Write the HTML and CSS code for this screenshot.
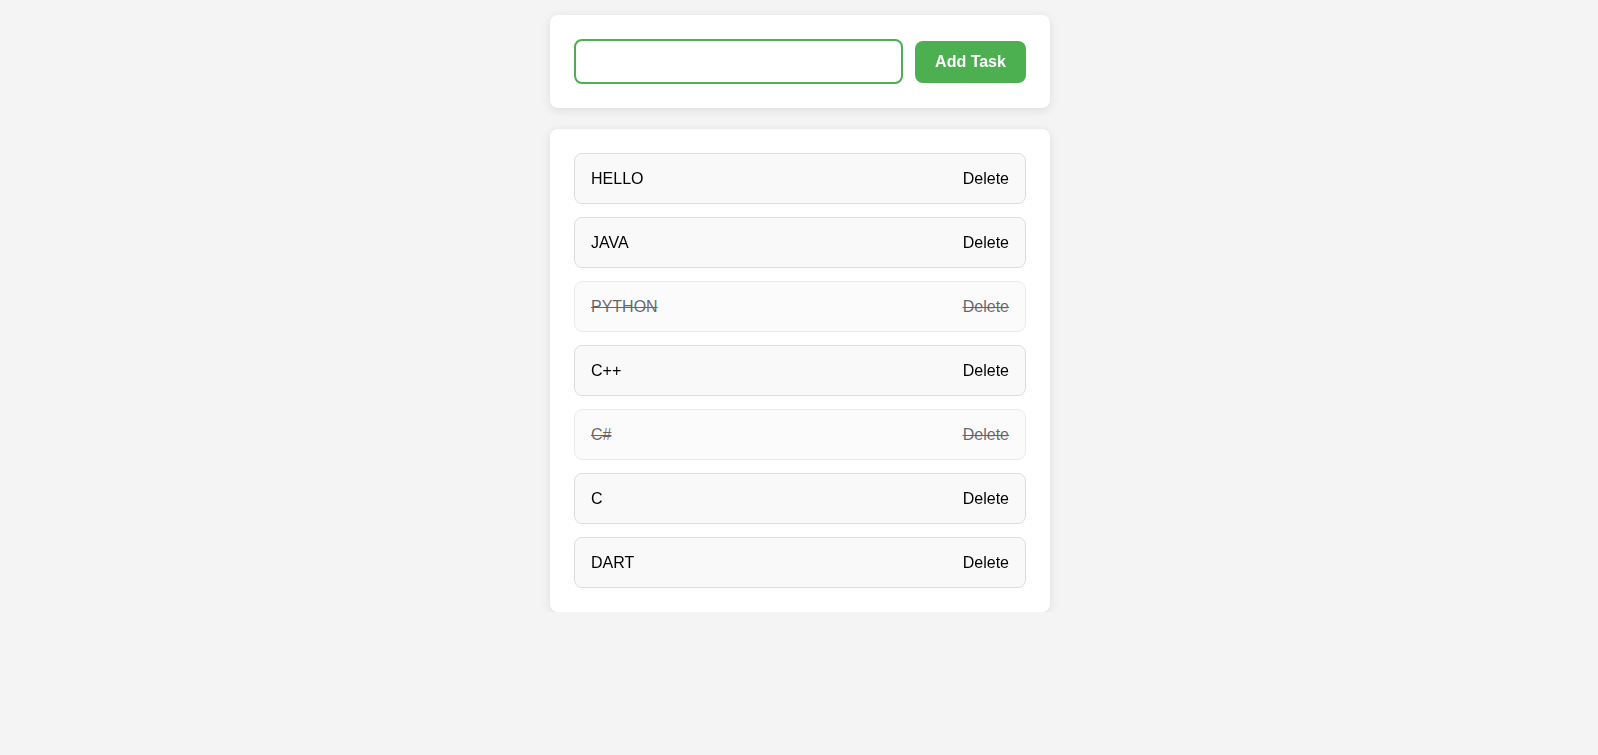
FILE: index.html
```html
<!DOCTYPE html>
<html lang="en">
<head>
<meta charset="utf-8">
<title>Todo</title>
<link rel="stylesheet" href="styles.css">
</head>
<body>
<main class="app">
  <section class="card add-card">
    <input class="task-input" type="text" autofocus>
    <button class="add-btn">Add Task</button>
  </section>
  <section class="card list-card">
    <ul class="task-list">
      <li class="task"><span class="task-text">HELLO</span><button class="del-btn">Delete</button></li>
      <li class="task"><span class="task-text">JAVA</span><button class="del-btn">Delete</button></li>
      <li class="task done"><span class="task-text">PYTHON</span><button class="del-btn">Delete</button></li>
      <li class="task"><span class="task-text">C++</span><button class="del-btn">Delete</button></li>
      <li class="task done"><span class="task-text">C#</span><button class="del-btn">Delete</button></li>
      <li class="task"><span class="task-text">C</span><button class="del-btn">Delete</button></li>
      <li class="task"><span class="task-text">DART</span><button class="del-btn">Delete</button></li>
    </ul>
  </section>
</main>
</body>
</html>
```
FILE: styles.css
```css
* { box-sizing: border-box; }
html, body {
  margin: 0;
  background: #f4f4f4;
  font-family: "Liberation Sans", Arial, sans-serif;
  font-size: 16px;
  color: #000;
}
body { padding: 15px 0 0 2px; }
.app {
  width: 500px;
  margin: 0 auto;
  display: flex;
  flex-direction: column;
  gap: 21px;
}
.card {
  background: #fff;
  border-radius: 8px;
  box-shadow: 0 2px 10px rgba(0, 0, 0, 0.1);
  padding: 24px;
}
.add-card {
  display: flex;
  align-items: center;
  gap: 12px;
}
.task-input {
  flex: 1;
  height: 45px;
  border: 2px solid #4caf50;
  border-radius: 8px;
  padding: 0 16px;
  font-family: inherit;
  font-size: 16px;
  outline: none;
  color: #000;
  caret-color: #000;
}
.add-btn {
  width: 111px;
  height: 42px;
  background: #4caf50;
  color: #fff;
  border: none;
  border-radius: 8px;
  font-family: inherit;
  font-size: 16px;
  font-weight: bold;
  cursor: pointer;
}
.task-list {
  list-style: none;
  margin: 0;
  padding: 0;
  display: flex;
  flex-direction: column;
  gap: 13px;
}
.task {
  height: 51px;
  display: flex;
  align-items: center;
  justify-content: space-between;
  padding: 0 16px;
  background: #f9f9f9;
  border: 1px solid #ddd;
  border-radius: 8px;
}
.del-btn {
  background: none;
  border: none;
  padding: 0;
  font-family: inherit;
  font-size: 16px;
  color: #000;
  cursor: pointer;
  text-decoration: inherit;
}
.task.done {
  opacity: 0.6;
  text-decoration: line-through;
}
```
